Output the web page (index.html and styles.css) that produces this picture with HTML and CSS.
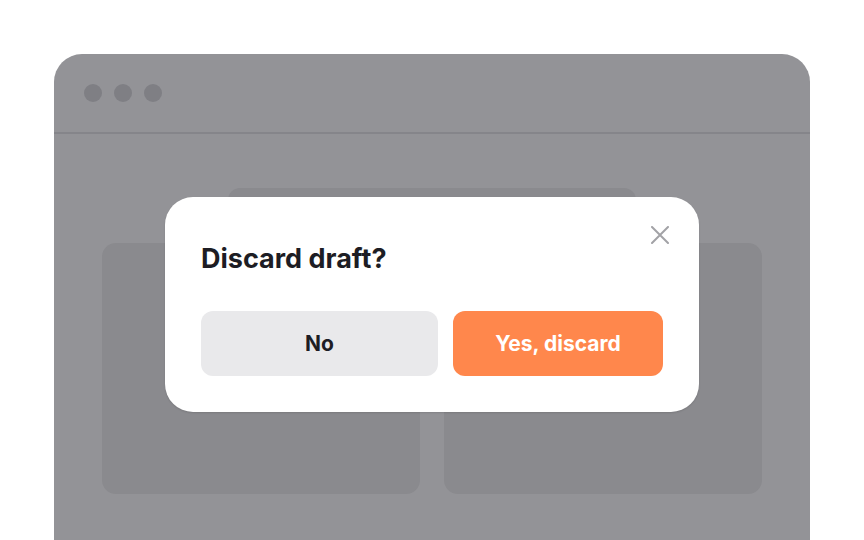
FILE: index.html
```html
<!DOCTYPE html>
<html>
<head>
<meta charset="utf-8">
<title>Discard draft</title>
<link rel="stylesheet" href="styles.css">
</head>
<body>

<div class="window">
	<div class="titlebar">
		<span class="dot"></span>
		<span class="dot"></span>
		<span class="dot"></span>
	</div>
	<div class="content">
		<div class="searchbar"></div>
		<div class="cards">
			<div class="card"></div>
			<div class="card"></div>
		</div>
	</div>

	<!-- confirm dialog, over the page -->
	<div class="dialog">
		<button class="close" aria-label="Close">
			<svg width="18" height="18" viewBox="0 0 18 18">
				<path d="M1 1 L17 17 M17 1 L1 17" stroke="#a2a2a6" stroke-width="2" stroke-linecap="round" fill="none"/>
			</svg>
		</button>
		<h2 class="dialog_title">Discard draft?</h2>
		<div class="dialog_actions">
			<button class="btn btn_no">No</button>
			<button class="btn btn_yes">Yes, discard</button>
		</div>
	</div>
</div>

</body>
</html>
```

FILE: styles.css
```css
html, body {
	margin: 0px;
	padding: 0px;
	background: #fff;
	overflow: hidden;
	height: 100%;
}
body {
	font-family: Inter, "Liberation Sans", sans-serif;
}
.window {
	position: relative;
	margin: 54px 0 0 54px;
	width: 756px;
	height: 486px;
	background: #939397;
	border-radius: 28px 28px 0 0;
}
.titlebar {
	display: flex;
	align-items: center;
	gap: 12px;
	height: 78px;
	padding-left: 30px;
	border-bottom: 2px solid #85858a;
}
.dot {
	width: 18px;
	height: 18px;
	border-radius: 50%;
	background: #7f7f84;
}
.content {
	padding: 54px 48px 0 48px;
}
.searchbar {
	width: 408px;
	height: 40px;
	margin: 0 auto;
	background: #8a8a8e;
	border-radius: 12px;
}
.cards {
	display: grid;
	grid-template-columns: 1fr 1fr;
	gap: 24px;
	margin-top: 15px;
}
.card {
	height: 251px;
	background: #8a8a8e;
	border-radius: 14px;
}
.dialog {
	position: absolute;
	left: 111px;
	top: 143px;
	width: 462px;
	padding: 36px;
	background: #fff;
	border-radius: 28px;
	box-shadow: 0 1px 2px rgba(0,0,0,0.12);
}
.close {
	position: absolute;
	top: 29px;
	right: 30px;
	width: 18px;
	height: 18px;
	padding: 0;
	border: 0;
	background: none;
	cursor: pointer;
}
.close svg {
	display: block;
}
.dialog_title {
	margin: 10px 0 0 0;
	font-size: 27px;
	font-weight: 700;
	line-height: 32px;
	color: #1d1d24;
}
.dialog_actions {
	display: flex;
	gap: 15px;
	margin-top: 36px;
}
.btn {
	height: 65px;
	border: 0;
	border-radius: 12px;
	font-family: inherit;
	font-size: 21px;
	font-weight: 700;
	cursor: pointer;
}
.btn_no {
	width: 237px;
	background: #e9e9eb;
	color: #1d1d24;
}
.btn_yes {
	flex: 1;
	background: #ff874c;
	color: #fff;
}
```
